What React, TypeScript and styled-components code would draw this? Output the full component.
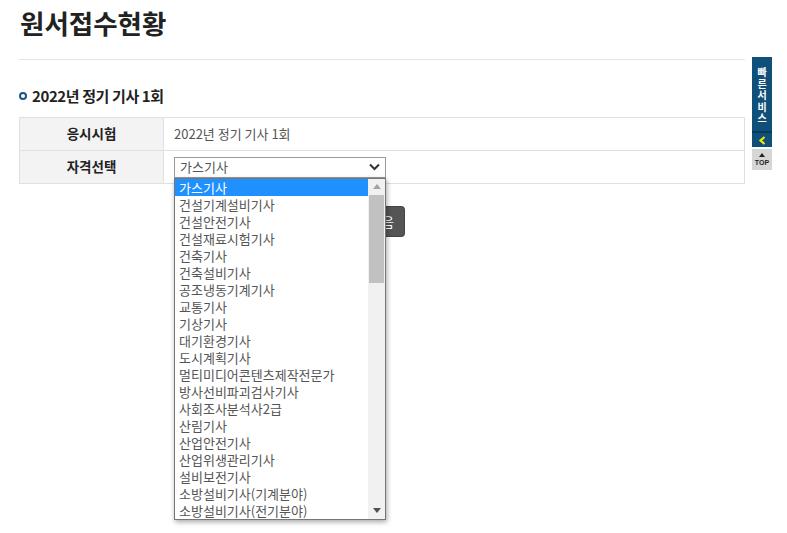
import styled, { createGlobalStyle } from 'styled-components';

const GlobalStyle = createGlobalStyle`
  body {
    margin: 0;
    background: #fff;
    font-family: 'Noto Sans CJK KR', 'Noto Sans', sans-serif;
    color: #222;
  }
  #root {
    min-height: 533px;
  }
`;

const LICENSES = [
  '가스기사',
  '건설기계설비기사',
  '건설안전기사',
  '건설재료시험기사',
  '건축기사',
  '건축설비기사',
  '공조냉동기계기사',
  '교통기사',
  '기상기사',
  '대기환경기사',
  '도시계획기사',
  '멀티미디어콘텐츠제작전문가',
  '방사선비파괴검사기사',
  '사회조사분석사2급',
  '산림기사',
  '산업안전기사',
  '산업위생관리기사',
  '설비보전기사',
  '소방설비기사(기계분야)',
  '소방설비기사(전기분야)',
];

export default function App() {
  return (
    <>
      <GlobalStyle />
      <Page>
        <Title>원서접수현황</Title>
        <Divider />
        <SectionTitle>
          <Bullet />
          2022년 정기 기사 1회
        </SectionTitle>
        <Table>
          <tbody>
            <tr>
              <HeadCell>응시시험</HeadCell>
              <DataCell>2022년 정기 기사 1회</DataCell>
            </tr>
            <tr>
              <HeadCell>자격선택</HeadCell>
              <DataCell>
                <SelectWrap>
                  <SelectBox>
                    가스기사
                    <svg width="11" height="8" viewBox="0 0 11 8">
                      <path d="M1 1.5 L5.5 6 L10 1.5" fill="none" stroke="#333" strokeWidth="2" />
                    </svg>
                  </SelectBox>
                  <OptionList>
                    <Options>
                      {LICENSES.map((name, i) => (
                        <Option key={name} $active={i === 0}>
                          {name}
                        </Option>
                      ))}
                    </Options>
                    <ScrollBar>
                      <ScrollArrow>
                        <svg width="8" height="5" viewBox="0 0 8 5">
                          <path d="M0 5 L4 0 L8 5 Z" fill="#a3a3a3" />
                        </svg>
                      </ScrollArrow>
                      <Track>
                        <Thumb />
                      </Track>
                      <ScrollArrow>
                        <svg width="8" height="5" viewBox="0 0 8 5">
                          <path d="M0 0 L8 0 L4 5 Z" fill="#505050" />
                        </svg>
                      </ScrollArrow>
                    </ScrollBar>
                  </OptionList>
                </SelectWrap>
              </DataCell>
            </tr>
          </tbody>
        </Table>
        <Actions>
          <NextButton>다음</NextButton>
        </Actions>
      </Page>
      <QuickMenu>
        <QuickLabel>
          {'빠른서비스'.split('').map((c, i) => (
            <span key={i}>{c}</span>
          ))}
        </QuickLabel>
        <QuickToggle>
          <svg width="8" height="9" viewBox="0 0 8 9">
            <path d="M6.5 1 L2.5 4.5 L6.5 8" fill="none" stroke="#f5e700" strokeWidth="2.2" />
          </svg>
        </QuickToggle>
        <TopButton>
          <svg width="6" height="4" viewBox="0 0 6 4">
            <path d="M0 4 L3 0 L6 4 Z" fill="#222" />
          </svg>
          TOP
        </TopButton>
      </QuickMenu>
    </>
  );
}

const Page = styled.div`
  width: 726px;
  padding: 0 0 0 19px;
`;

const Title = styled.h1`
  margin: 0;
  padding: 5px 0 0 1px;
  height: 42px;
  box-sizing: border-box;
  font-size: 26.5px;
  font-weight: 700;
  color: #222;
  line-height: 36px;
`;

const Divider = styled.hr`
  margin: 17px 0 0;
  border: 0;
  border-top: 1px solid #e6e6e6;
`;

const SectionTitle = styled.h2`
  display: flex;
  align-items: center;
  gap: 5px;
  margin: 24px 0 0;
  height: 22px;
  font-size: 15px;
  font-weight: 700;
  color: #222;
  letter-spacing: -0.4px;
`;

const Bullet = styled.span`
  width: 4px;
  height: 4px;
  border: 2px solid #1b5581;
  border-radius: 50%;
  margin-top: 1px;
`;

const Table = styled.table`
  margin-top: 11px;
  width: 726px;
  border-collapse: collapse;
  border: 1px solid #dcdcdc;
`;

const HeadCell = styled.th`
  box-sizing: border-box;
  width: 144px;
  height: 33px;
  padding: 0 0 3px;
  background: #f3f3f3;
  border: 1px solid #e0e0e0;
  font-size: 13.5px;
  font-weight: 700;
  line-height: 16px;
  color: #222;
  text-align: center;
`;

const DataCell = styled.td`
  box-sizing: border-box;
  height: 33px;
  padding: 0 10px;
  border: 1px solid #e0e0e0;
  font-size: 13px;
  line-height: 16px;
  color: #555;
  vertical-align: middle;
`;

const SelectWrap = styled.div`
  position: relative;
  width: 212px;
`;

const SelectBox = styled.div`
  display: flex;
  align-items: center;
  justify-content: space-between;
  box-sizing: border-box;
  height: 21px;
  padding: 0 5px;
  border: 1px solid #9a9a9a;
  font-size: 13px;
  color: #555;
  background: #fff;
`;

const OptionList = styled.div`
  position: absolute;
  top: 21px;
  left: 0;
  z-index: 5;
  display: flex;
  box-sizing: border-box;
  width: 212px;
  height: 342px;
  border: 1px solid #767676;
  background: #fff;
  box-shadow: 1px 2px 5px rgba(0, 0, 0, 0.35);
`;

const Options = styled.div`
  flex: 1;
  overflow: hidden;
`;

const Option = styled.div<{ $active?: boolean }>`
  height: 17px;
  padding-left: 4px;
  font-size: 13px;
  line-height: 17px;
  white-space: nowrap;
  color: ${(p) => (p.$active ? '#fff' : '#555')};
  background: ${(p) => (p.$active ? '#1e90ff' : 'transparent')};
`;

const ScrollBar = styled.div`
  display: flex;
  flex-direction: column;
  width: 17px;
  background: #f1f1f1;
`;

const ScrollArrow = styled.div`
  display: flex;
  align-items: center;
  justify-content: center;
  height: 16px;
`;

const Track = styled.div`
  flex: 1;
  padding: 0 1px;
`;

const Thumb = styled.div`
  height: 88px;
  background: #c1c1c1;
`;

const Actions = styled.div`
  display: flex;
  justify-content: center;
  padding-top: 23px;
`;

const NextButton = styled.button`
  width: 44px;
  height: 29px;
  border: 0;
  border-radius: 3px;
  background: #555;
  color: #fff;
  font-family: inherit;
  font-size: 13px;
  box-shadow: 0 0 0 1px #444;
`;

const QuickMenu = styled.aside`
  position: absolute;
  top: 57px;
  left: 752px;
  width: 20px;
  display: flex;
  flex-direction: column;
`;

const QuickLabel = styled.div`
  display: flex;
  flex-direction: column;
  align-items: center;
  height: 76px;
  padding-top: 9px;
  box-sizing: border-box;
  background: #0f4f79;
  color: #fff;
  font-size: 10px;
  font-weight: 700;
  line-height: 11.5px;
  border-bottom: 2px solid #083a5a;
`;

const QuickToggle = styled.div`
  display: flex;
  align-items: center;
  justify-content: center;
  height: 14px;
  background: #0f4f79;
`;

const TopButton = styled.div`
  display: flex;
  flex-direction: column;
  align-items: center;
  margin-top: 2px;
  height: 21px;
  padding-top: 4px;
  box-sizing: border-box;
  background: #d6d6d6;
  color: #222;
  font-family: 'Liberation Sans', sans-serif;
  font-size: 7px;
  font-weight: 700;
  line-height: 9px;
  gap: 1px;
`;
